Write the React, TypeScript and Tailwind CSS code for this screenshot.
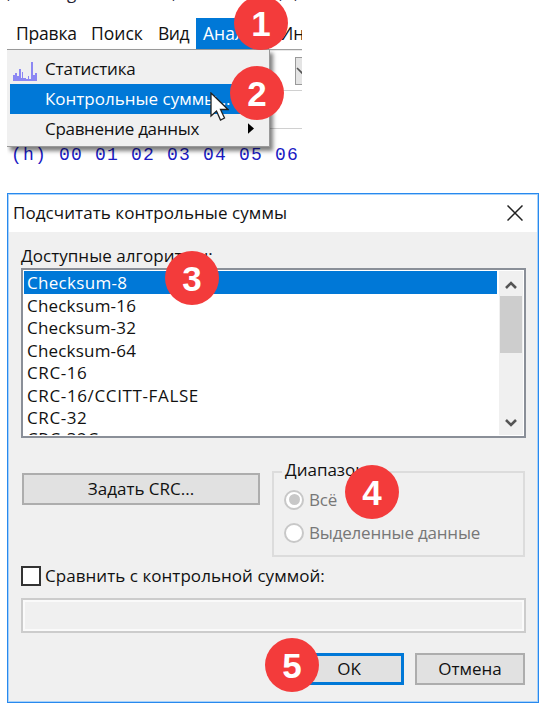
import type { ReactNode } from "react";

function Badge({ n, place }: { n: number; place: string }) {
  return (
    <div
      className={`absolute z-20 flex size-[54px] items-center justify-center rounded-full bg-[#f33b3b] font-['Liberation_Sans',sans-serif] text-[35px] leading-none font-bold text-white ${place}`}
    >
      {n}
    </div>
  );
}

function HexMenu() {
  return (
    <section className="relative ml-[7px] h-[166px] w-[295px] overflow-hidden bg-white">
      <div className="h-[18px] overflow-hidden">
        <div className="-mt-[19px] flex h-6 text-[17px] leading-6 text-[#223]">
          <span className="w-[60px]">,</span>
          <span className="w-[105px]">g</span>
          <span className="w-[107px]">,</span>
          <span className="w-[15px]">,</span>
          <span>,</span>
        </div>
      </div>
      <nav className="flex h-[31px] items-center text-[17.5px] whitespace-nowrap">
        <span className="ml-[9px] w-[75px] shrink-0 tracking-[-0.2px]">Правка</span>
        <span className="w-[67px] shrink-0">Поиск</span>
        <span className="w-[38px] shrink-0 tracking-[-0.5px]">Вид</span>
        <span className="flex h-full w-[73px] shrink-0 items-center bg-[#0078d7] pl-[7px] text-white">Анализ</span>
        <span className="ml-[11px] shrink-0">Инс</span>
      </nav>
      <div className="h-[2px] border-t border-[#a0a0a0] bg-[#e8e8e8]" />
      <div className="flex h-[40px] items-center justify-end border-b border-[#d0d0d0]">
        <div className="flex h-[28px] w-[7px] items-center overflow-hidden border border-r-0 border-[#999] bg-[#e4e4e4]">
          <svg className="h-2 w-3 shrink-0" viewBox="0 0 12 8" fill="none" stroke="#555" strokeWidth="1.6">
            <path d="M1 1l5 5 5-5" />
          </svg>
        </div>
      </div>
      <div className="h-[38px] border-b border-[#d0d0d0]" />
      <div className="mt-[15px] ml-[4px] font-['Liberation_Mono',monospace] text-[18px] leading-[22px] tracking-[1.2px] whitespace-pre text-[#1a1ac4]">
        (h) 00 01 02 03 04 05 06
      </div>

      <div className="absolute top-[49px] left-0 w-[263px] border-t border-r border-b border-[#999] bg-[#f0f0f0] p-[3px] text-[17px] shadow-[3px_4px_4px_rgba(0,0,0,0.5)]">
        <div className="flex h-[31px] items-center">
          <svg className="mt-1 ml-[3px] h-[20px] w-[24px]" viewBox="0 0 24 20">
            <path d="M0 20V14H2V12H4V15H6V8H8V17H9V11H10V17H13V18H15V15H16V18H18V1H20V14H22V12H24V20Z" fill="#8c87f3" />
          </svg>
          <span className="ml-[8px] tracking-[-0.15px]">Статистика</span>
        </div>
        <div className="flex h-[30px] items-center bg-[#0078d7] text-white">
          <span className="ml-[35px]">Контрольные суммы...</span>
        </div>
        <div className="flex h-[29px] items-center">
          <span className="ml-[35px] tracking-[-0.3px]">Сравнение данных</span>
          <svg className="mr-[12px] ml-auto h-[11px] w-[6px]" viewBox="0 0 7 12">
            <path d="M0 0L7 6L0 12Z" />
          </svg>
        </div>
      </div>
      <svg className="absolute top-[92px] left-[203px] z-30 h-[30px] w-[19px]" viewBox="0 0 19 30">
        <path d="M1 1V24L6.5 19L10.5 28L14.5 26L10.5 17.5H18Z" fill="#fff" stroke="#222" strokeWidth="1.3" />
      </svg>
    </section>
  );
}

const algorithms = [
  { name: "Checksum-8", spacing: "tracking-[0.3px]" },
  { name: "Checksum-16", spacing: "tracking-[0.2px]" },
  { name: "Checksum-32", spacing: "tracking-[0.2px]" },
  { name: "Checksum-64", spacing: "tracking-[0.2px]" },
  { name: "CRC-16", spacing: "tracking-[0.6px]" },
  { name: "CRC-16/CCITT-FALSE", spacing: "tracking-[0.63px]" },
  { name: "CRC-32", spacing: "tracking-[0.6px]" },
];

function Chevron({ up = false }: { up?: boolean }) {
  return (
    <svg className="h-[10px] w-[12px]" viewBox="0 0 12 10" fill="none" stroke="#555" strokeWidth="2.6">
      <path d={up ? "M1 8L6 3L11 8" : "M1 2L6 7L11 2"} />
    </svg>
  );
}

function AlgorithmList() {
  return (
    <div className="flex h-[170px] border-2 border-[#8a8f98] bg-white p-px">
      <ul className="h-[164px] flex-1 overflow-hidden text-[17px]">
        {algorithms.map(({ name, spacing }, i) => (
          <li key={name} className={`h-[22.5px] pl-[3px] leading-[23px] ${spacing} ${i === 0 ? "bg-[#0078d7] text-white" : ""}`}>
            {name}
          </li>
        ))}
        <li className="h-[22.5px] pl-[3px] leading-[20px] tracking-[0.6px]">CRC-32C</li>
      </ul>
      <div className="ml-[2px] flex w-[24px] flex-col items-center bg-[#f0f0f0]">
        <div className="flex h-[25px] items-center pt-[3px]"><Chevron up /></div>
        <div className="h-[57px] w-[22px] bg-[#cdcdcd]" />
        <div className="mt-auto flex h-[24px] items-center"><Chevron /></div>
      </div>
    </div>
  );
}

function Radio({ checked = false, children }: { checked?: boolean; children: ReactNode }) {
  return (
    <label className="flex h-[33px] items-center text-[17px] tracking-[-0.2px] text-[#777]">
      <span className="mr-[5px] flex size-[20px] items-center justify-center rounded-full border-2 border-[#c8c8c8] bg-white">
        {checked && <span className="size-[11px] rounded-full bg-[#c8c8c8]" />}
      </span>
      {children}
    </label>
  );
}

function ChecksumDialog() {
  return (
    <section className="mt-[27px] ml-[7px] flex h-[510px] w-[532px] flex-col border border-[#2889ee] bg-[#f0f0f0] shadow-[inset_0_0_0_1px_#a8d2fa]">
      <header className="mx-px mt-px flex h-[37px] shrink-0 items-center justify-between bg-white pr-[14px] pl-[4px] text-[17px]">
        <span className="-mt-px tracking-[0.07px]">Подсчитать контрольные суммы</span>
        <svg className="-mt-px h-[16px] w-[16px]" viewBox="0 0 16 16" stroke="#222" strokeWidth="1.5">
          <path d="M0.5 0.5L15.5 15.5M15.5 0.5L0.5 15.5" />
        </svg>
      </header>
      <div className="flex flex-1 flex-col pr-[12px] pl-[13px] text-[17px]">
        <div className="mt-[12px] h-[24px] leading-[24px] tracking-[0.05px]">Доступные алгоритмы:</div>
        <AlgorithmList />
        <div className="mt-[22px] flex h-[97px]">
          <button className="mt-[13px] ml-[1px] h-[32px] w-[238px] border-2 border-[#adadad] bg-[#e1e1e1]">Задать CRC...</button>
          <fieldset className="relative mt-[11px] ml-[12px] h-[86px] w-[253px] border-2 border-[#dcdcdc] pt-[10px] pl-[10px]">
            <div className="absolute -top-[15px] left-[8px] bg-[#f0f0f0] px-[3px] leading-[24px]">Диапазон</div>
            <Radio checked>Всё</Radio>
            <Radio>Выделенные данные</Radio>
          </fieldset>
        </div>
        <label className="mt-[8px] flex h-[22px] items-center tracking-[0.05px]">
          <span className="mr-[4px] size-[20px] border-2 border-[#333] bg-white" />
          Сравнить с контрольной суммой:
        </label>
        <div className="mt-[11px] h-[35px] border-2 border-[#ccc] bg-[#f0f0f0] shadow-[inset_0_0_0_2px_#fafafa]" />
        <div className="mt-[20px] mr-[1px] flex justify-end gap-[11px]">
          <button className="h-[32px] w-[110px] border-[3px] border-[#0078d7] bg-[#e1e1e1]">OK</button>
          <button className="h-[32px] w-[110px] border-2 border-[#adadad] bg-[#e1e1e1]">Отмена</button>
        </div>
      </div>
    </section>
  );
}

export default function App() {
  return (
    <main className="relative h-[708px] w-[545px] overflow-hidden bg-white font-['Open_Sans','Noto_Sans',sans-serif] text-[#111]">
      <HexMenu />
      <ChecksumDialog />
      <Badge n={1} place="top-[-4px] left-[234px]" />
      <Badge n={2} place="top-[66px] left-[230px]" />
      <Badge n={3} place="top-[251px] left-[165px]" />
      <Badge n={4} place="top-[465px] left-[345px]" />
      <Badge n={5} place="top-[638px] left-[265px]" />
    </main>
  );
}
